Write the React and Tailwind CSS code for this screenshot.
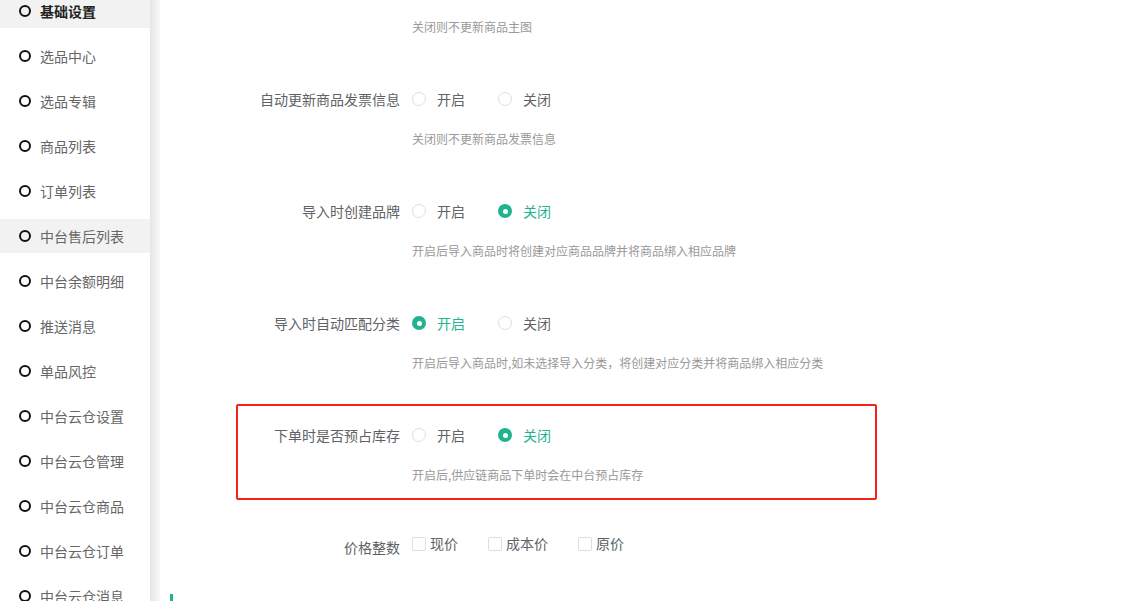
import React from 'react';

const menu = [
    '基础设置',
    '选品中心',
    '选品专辑',
    '商品列表',
    '订单列表',
    '中台售后列表',
    '中台余额明细',
    '推送消息',
    '单品风控',
    '中台云仓设置',
    '中台云仓管理',
    '中台云仓商品',
    '中台云仓订单',
    '中台云仓消息',
];

const settings = [
    { label: '自动更新商品主图', value: 'on', desc: '关闭则不更新商品主图' },
    { label: '自动更新商品发票信息', value: null, desc: '关闭则不更新商品发票信息' },
    { label: '导入时创建品牌', value: 'off', desc: '开启后导入商品时将创建对应商品品牌并将商品绑入相应品牌' },
    { label: '导入时自动匹配分类', value: 'on', desc: '开启后导入商品时,如未选择导入分类，将创建对应分类并将商品绑入相应分类' },
    { label: '下单时是否预占库存', value: 'off', desc: '开启后,供应链商品下单时会在中台预占库存', highlight: true },
];

const Radio = ({ checked, text }) => (
    <div className="flex items-center gap-[11px] mr-[33px]">
        {checked ? (
            <span className="w-[14px] h-[14px] rounded-full bg-[#1fb48f] flex items-center justify-center">
                <span className="w-[5px] h-[5px] rounded-full bg-white" />
            </span>
        ) : (
            <span className="w-[14px] h-[14px] rounded-full border border-[#dcdfe6] bg-white" />
        )}
        <span className={`text-[14px] ${checked ? 'text-[#1fb48f]' : 'text-[#606266]'}`}>{text}</span>
    </div>
);

const Checkbox = ({ text }) => (
    <div className="flex items-center gap-[4px] mr-[30px]">
        <span className="w-[14px] h-[14px] rounded-[2px] border border-[#dcdfe6] bg-white" />
        <span className="text-[14px] text-[#606266]">{text}</span>
    </div>
);

const SettingItem = ({ label, value, desc, highlight, className = '' }) => (
    <div
        className={`h-[96px] mb-[16px] pt-[19px] border-[2px] rounded-[2px] ${
            highlight ? 'border-[#f5221b]' : 'border-transparent'
        } ${className}`}
    >
        <div className="flex items-center h-[20px]">
            <div className="w-[162px] text-right text-[14px] text-[#606266]">{label}</div>
            <div className="ml-3 flex items-center">
                <Radio checked={value === 'on'} text="开启" />
                <Radio checked={value === 'off'} text="关闭" />
            </div>
        </div>
        <div className="ml-[174px] mt-[20px] h-[20px] leading-[20px] text-[12px] text-[#999]">{desc}</div>
    </div>
);

export default function App() {
    return (
        <div
            className="flex h-[601px] w-full overflow-hidden bg-white"
            style={{ fontFamily: '"Noto Sans CJK SC", "Noto Sans", sans-serif' }}
        >
            <aside className="w-[150px] shrink-0 bg-white">
                <ul className="-mt-[6px]">
                    {menu.map((item, i) => (
                        <li
                            key={item}
                            className={`h-[34px] mb-[11px] flex items-center pl-[19px] gap-[9px] ${
                                i === 0 || i === 5 ? 'bg-[#f2f2f2]' : ''
                            }`}
                        >
                            <span className="w-[12px] h-[12px] rounded-full border-2 border-[#111]" />
                            <span
                                className={`text-[14px] ${
                                    i === 0 ? 'font-bold text-[#222]' : 'text-[#666]'
                                }`}
                            >
                                {item}
                            </span>
                        </li>
                    ))}
                </ul>
            </aside>
            <div className="w-[10px] shrink-0 bg-gradient-to-r from-[#e6e6e6] to-[#f7f7f7]" />
            <main className="flex-1 pl-[10px]">
                <div className="ml-[66px] w-[641px]">
                    {settings.map((s, i) => (
                        <SettingItem key={s.label} {...s} className={i === 0 ? '-mt-[44px]' : ''} />
                    ))}
                    <div className="h-[78px] pt-[15px] border-[2px] border-transparent">
                        <div className="flex items-start h-[20px]">
                            <div className="w-[162px] text-right text-[14px] text-[#606266] pt-[4px]">价格整数</div>
                            <div className="ml-3 flex items-center">
                                <Checkbox text="现价" />
                                <Checkbox text="成本价" />
                                <Checkbox text="原价" />
                            </div>
                        </div>
                    </div>
                </div>
                <div className="border-l-[3px] border-[#1fb48f] h-4" />
            </main>
        </div>
    );
}
